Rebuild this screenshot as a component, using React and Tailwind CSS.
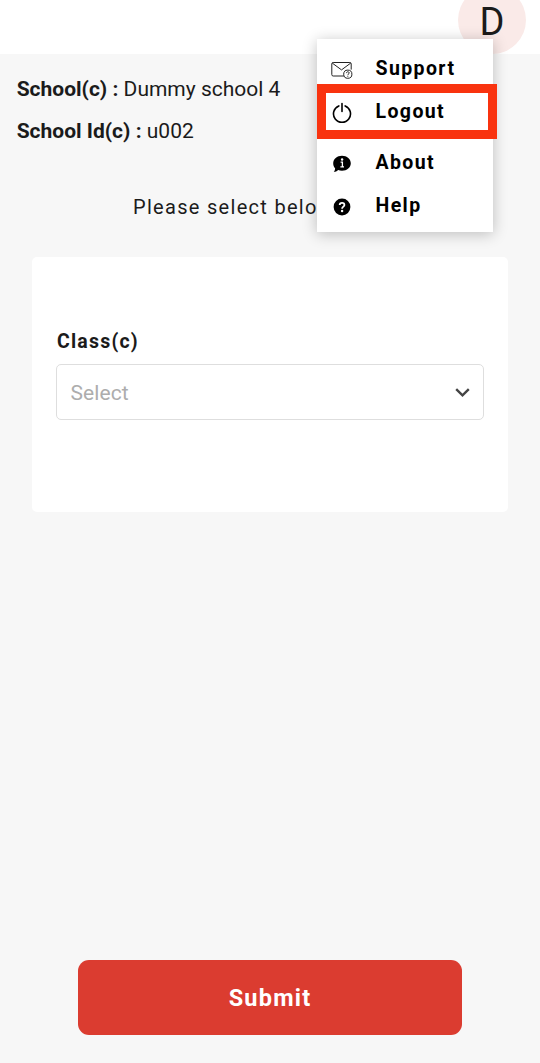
function SupportIcon() {
  return (
    <svg className="h-[19px] w-[22px]" viewBox="0 0 22 19" fill="none" stroke="#222" strokeWidth="1">
      <path d="M12.8 15H2.2Q.8 15 .8 13.6V2.9Q.8 1.5 2.2 1.5H18.8Q20.2 1.5 20.2 2.9V8.6" />
      <path d="M1.3 2.1L10.5 8.9L19.7 2.1" />
      <circle cx="16.8" cy="13.2" r="4.1" />
      <path d="M15.5 12.1C15.5 10.3 18.2 10.3 18.2 12C18.2 13 16.8 12.9 16.8 14.1M16.8 14.8V15.7" />
    </svg>
  );
}

function PowerIcon() {
  return (
    <svg className="h-[22px] w-[20px]" viewBox="0 0 20 22" fill="none" stroke="#000" strokeWidth="1.6" strokeLinecap="round">
      <path d="M10 1.5V9.5M6.8 3.9A8.5 8.5 0 1 0 13.2 3.9" />
    </svg>
  );
}

function AboutIcon() {
  return (
    <svg className="h-[18px] w-[18px]" viewBox="0 0 18 18">
      <path d="M9 .7C14 .7 17.8 4 17.8 8.2S14 15.7 9 15.7C7.6 15.7 6.3 15.5 5.2 15C4 16.2 2.4 16.9.8 17C1.6 16 2.1 14.6 2.1 13.2C.8 11.9.2 10.1.2 8.2C.2 4 4 .7 9 .7Z" />
      <path d="M7.6 7.1H9.4V11.8M7.4 11.8H11" fill="none" stroke="#fff" strokeWidth="1.3" />
      <circle cx="9.1" cy="4.5" r="1.2" fill="#fff" />
    </svg>
  );
}

function HelpIcon() {
  return (
    <svg className="h-[18px] w-[18px]" viewBox="0 0 18 18">
      <circle cx="9" cy="9" r="8.4" />
      <path d="M6.7 7.1C6.7 4 11.4 4.1 11.4 6.9C11.4 8.7 9.1 8.6 9.1 10.7" fill="none" stroke="#fff" strokeWidth="1.8" />
      <circle cx="9.1" cy="13" r="1.2" fill="#fff" />
    </svg>
  );
}

function MenuItem({ icon, label, className }) {
  return (
    <div className={`flex items-center ${className}`}>
      <span className="flex w-[31px] shrink-0 translate-y-[2px] justify-center">{icon}</span>
      <span className="ml-[18.5px] pt-[2px] text-[19.5px] leading-6 font-bold tracking-[1.4px] text-black">{label}</span>
    </div>
  );
}

function Menu() {
  return (
    <nav className="absolute top-[39px] left-[317px] z-10 h-[193px] w-[176px] bg-white shadow-[0_2px_14px_rgba(0,0,0,0.24)]">
      <MenuItem icon={<SupportIcon />} label="Support" className="h-[45px] pt-[13px] pl-[9px]" />
      <div className="h-[55px] w-[180px] border-[9px] border-[#f9330f] bg-white">
        <MenuItem icon={<PowerIcon />} label="Logout" className="h-[36px]" />
      </div>
      <MenuItem icon={<AboutIcon />} label="About" className="h-[45px] pl-[9px]" />
      <MenuItem icon={<HelpIcon />} label="Help" className="h-[42px] pl-[9px]" />
    </nav>
  );
}

export default function App() {
  return (
    <div className="relative flex h-[1063px] w-[540px] flex-col overflow-hidden bg-[#f7f7f7] font-['Roboto',sans-serif] text-[#1b1b1b]">
      <header className="flex h-[54px] shrink-0 justify-end bg-white pr-[14px]">
        <div className="-mt-[14px] flex h-[68px] w-[68px] items-center justify-center rounded-full bg-[#faeae8] text-[38px] leading-none">
          <span className="translate-y-[1.5px]">D</span>
        </div>
      </header>
      <section className="flex flex-col gap-[18px] pt-[23px] pl-[16.7px] text-[21px] leading-6">
        <p><span className="font-bold">School(c) :</span> Dummy school 4</p>
        <p><span className="font-bold">School Id(c) :</span> u002</p>
      </section>
      <p className="mt-[52px] ml-[133px] text-[20px] leading-6 tracking-[1.3px] whitespace-nowrap">Please select below</p>
      <main className="mx-8 mt-[38px] h-[255px] shrink-0 rounded-[5px] bg-white px-[24px] pt-[73px]">
        <label className="ml-px block text-[19.5px] leading-6 font-bold tracking-[1.2px]">Class(c)</label>
        <div className="mt-[10px] flex h-[56px] items-center justify-between rounded-[5px] border border-[#dedede] pr-[13px] pl-[13.5px]">
          <span className="translate-y-[1.5px] text-[21px] tracking-[0.1px] text-[#adadad]">Select</span>
          <svg className="h-[9px] w-[15px]" viewBox="0 0 15 9" fill="none" stroke="#444" strokeWidth="2.4">
            <path d="M1.2 1.2L7.5 7.3L13.8 1.2" />
          </svg>
        </div>
      </main>
      <button className="mx-[78px] mt-auto mb-[28px] h-[75px] shrink-0 rounded-[11px] bg-[#db3c30] pt-[3px] text-[23.5px] font-bold tracking-[1.2px] text-white">Submit</button>
      <Menu />
    </div>
  );
}
